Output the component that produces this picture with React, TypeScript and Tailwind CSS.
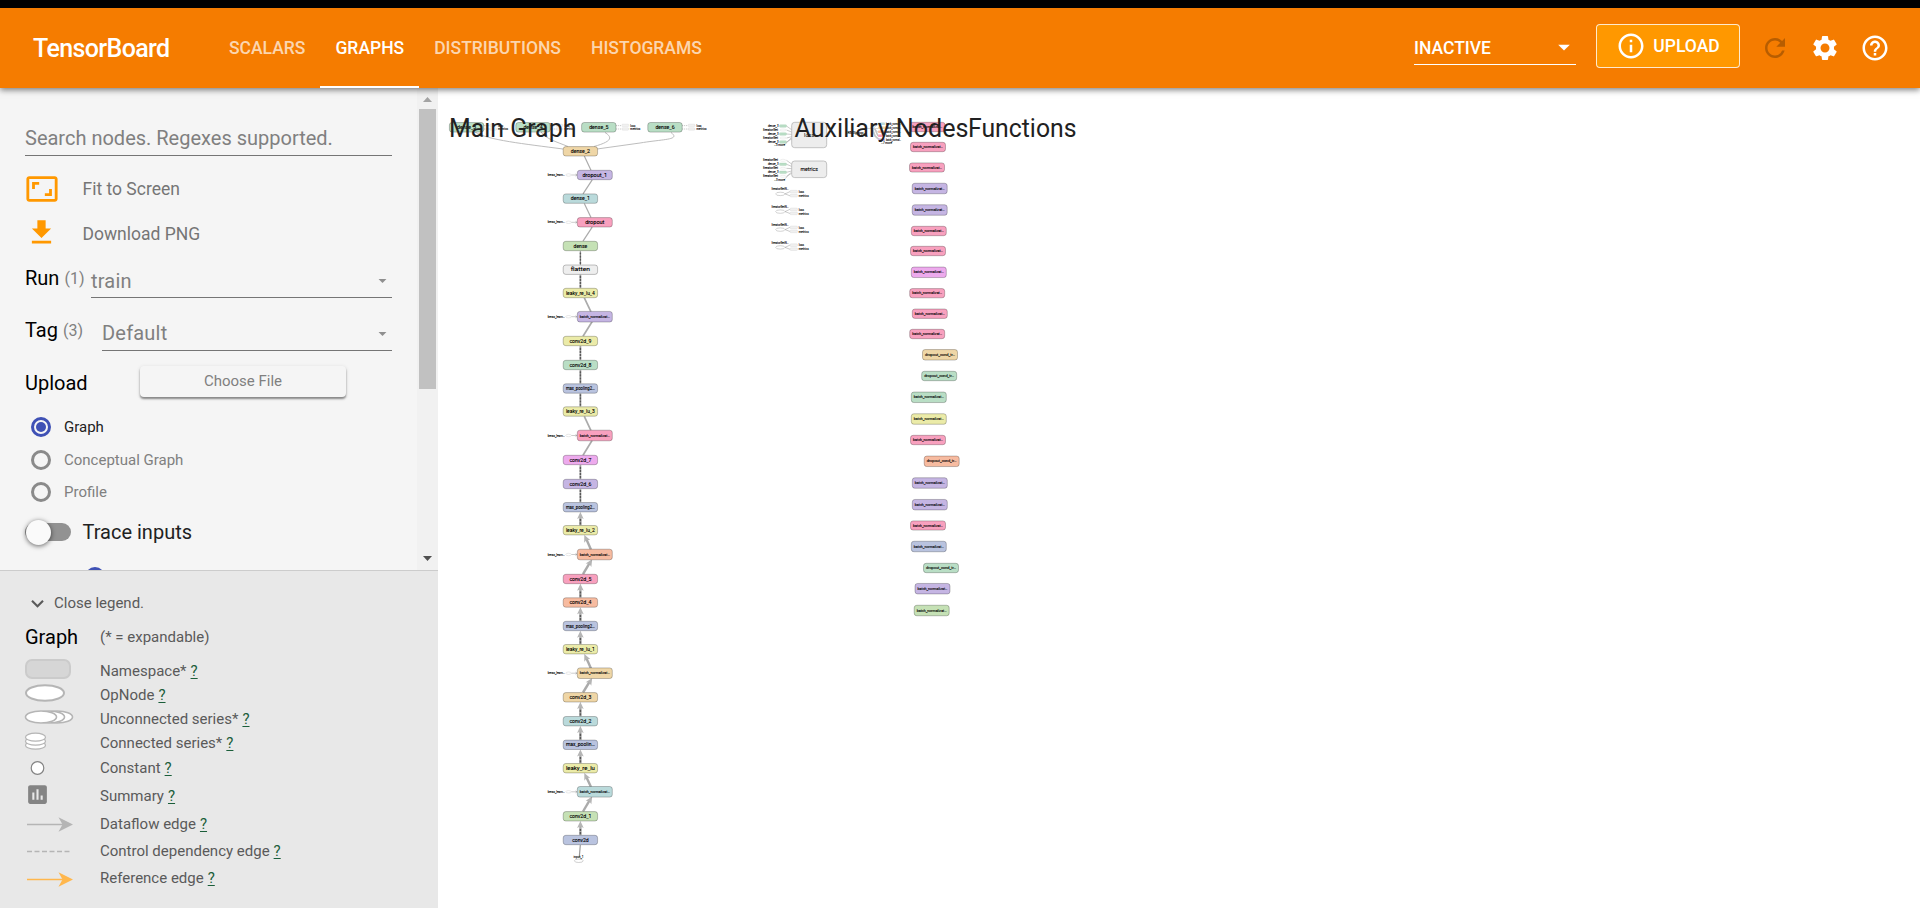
import React, { useState } from 'react';
import {
  MdArrowDropDown,
  MdAspectRatio,
  MdAssessment,
  MdFileDownload,
  MdHelpOutline,
  MdInfoOutline,
  MdKeyboardArrowDown,
  MdRefresh,
  MdSettings,
} from 'react-icons/md';

const TABS = ['SCALARS', 'GRAPHS', 'DISTRIBUTIONS', 'HISTOGRAMS'];
const COLOR_MODES = ['Graph', 'Conceptual Graph', 'Profile'];

const C = {
  blue: '#b9c3df',
  green: '#c5e1b5',
  mint: '#b9dec5',
  orange: '#f7bba0',
  pink: '#f8a0be',
  magenta: '#edaaed',
  purple: '#c5b5e3',
  tan: '#efd6a6',
  teal: '#badadb',
  yellow: '#ebeba8',
  grey: '#eeeeee',
};

interface GraphNode {
  label: string;
  y: number;
  fill: string;
  // side nodes sit right of the trunk and have a constant input
  side?: boolean;
}

// top (outputs) to bottom (input)
const TRUNK: GraphNode[] = [
  { label: 'dense_2', y: 151.3, fill: C.tan },
  { label: 'dropout_1', y: 175, fill: C.purple, side: true },
  { label: 'dense_1', y: 198.6, fill: C.teal },
  { label: 'dropout', y: 222.3, fill: C.pink, side: true },
  { label: 'dense', y: 246, fill: C.green },
  { label: 'flatten', y: 269.7, fill: C.grey },
  { label: 'leaky_re_lu_4', y: 293, fill: C.yellow },
  { label: 'batch_normalizat…', y: 316.7, fill: C.purple, side: true },
  { label: 'conv2d_9', y: 341, fill: C.yellow },
  { label: 'conv2d_8', y: 365, fill: C.mint },
  { label: 'max_pooling2…', y: 388.5, fill: C.blue },
  { label: 'leaky_re_lu_3', y: 411.5, fill: C.yellow },
  { label: 'batch_normalizat…', y: 435.5, fill: C.pink, side: true },
  { label: 'conv2d_7', y: 460, fill: C.magenta },
  { label: 'conv2d_6', y: 484, fill: C.purple },
  { label: 'max_pooling2…', y: 507.2, fill: C.blue },
  { label: 'leaky_re_lu_2', y: 530.2, fill: C.yellow },
  { label: 'batch_normalizat…', y: 554.5, fill: C.orange, side: true },
  { label: 'conv2d_5', y: 579, fill: C.pink },
  { label: 'conv2d_4', y: 602.5, fill: C.orange },
  { label: 'max_pooling2…', y: 626, fill: C.blue },
  { label: 'leaky_re_lu_1', y: 649.2, fill: C.yellow },
  { label: 'batch_normalizat…', y: 673.2, fill: C.tan, side: true },
  { label: 'conv2d_3', y: 697.3, fill: C.tan },
  { label: 'conv2d_2', y: 721.2, fill: C.teal },
  { label: 'max_poolin…', y: 744.8, fill: C.blue },
  { label: 'leaky_re_lu', y: 768.2, fill: C.yellow },
  { label: 'batch_normalizat…', y: 791.8, fill: C.teal, side: true },
  { label: 'conv2d_1', y: 816.3, fill: C.green },
  { label: 'conv2d', y: 840, fill: C.blue },
];

const FUNCTIONS: [number, number, string, number][] = [
  [927.5, 127, C.pink, 9.4],
  [928, 147, C.pink, 9.4],
  [927, 167.5, C.pink, 9.2],
  [929.7, 188.5, C.purple, 10.5],
  [929.7, 210, C.purple, 10.5],
  [928.8, 231, C.pink, 9.4],
  [928, 251, C.pink, 9.4],
  [928.8, 272.3, C.magenta, 10.5],
  [927.2, 293.2, C.pink, 9.2],
  [929.8, 313.7, C.pink, 9.4],
  [927.2, 334, C.pink, 9.4],
  [940, 354.8, C.tan, 10.5],
  [939.2, 376, C.mint, 9.4],
  [928.8, 397.3, C.mint, 10.5],
  [928.8, 419, C.yellow, 10.5],
  [928, 440, C.pink, 9.4],
  [941.7, 461.3, C.orange, 10.5],
  [929.8, 483, C.purple, 10.5],
  [929.8, 504.7, C.purple, 10.5],
  [928, 525.5, C.pink, 9.2],
  [928.8, 546.5, C.blue, 10.5],
  [941, 568, C.mint, 9.4],
  [932.5, 588.7, C.purple, 10.5],
  [931.7, 610.5, C.green, 10.5],
];

interface TinyTextProps {
  x: number;
  y: number;
  w: number;
  size?: number;
  children: string;
}

const TinyText: React.FC<TinyTextProps> = ({ x, y, w, size = 3, children }) => (
  <text
    x={x}
    y={y}
    fontSize={size}
    textLength={w}
    lengthAdjust="spacingAndGlyphs"
    fill="#000"
    stroke="#000"
    strokeWidth={0.1}
  >
    {children}
  </text>
);

interface BoxProps {
  x: number;
  y: number;
  fill: string;
  label: string;
  w?: number;
  h?: number;
}

const NodeBox: React.FC<BoxProps> = ({ x, y, fill, label, w = 34.4, h = 9.6 }) => {
  const long = label.length > 14;
  const textWidth = long ? 30 : Math.min(29, label.length * 2.75);
  return (
    <g>
      <rect x={x - w / 2} y={y - h / 2} width={w} height={h} rx={2.6} fill={fill} stroke="#000" strokeOpacity={0.3} strokeWidth={0.8} />
      <TinyText x={x - textWidth / 2} y={y + (long ? 1 : 1.6)} w={textWidth} size={long ? 3.2 : 4.8}>
        {label}
      </TinyText>
    </g>
  );
};

const nodeX = (n: GraphNode) => (n.side ? 594.8 : 580.4);

const TrunkEdge: React.FC<{ from: GraphNode; to: GraphNode; index: number }> = ({ from, to, index }) => {
  const vertical = !from.side && !to.side;
  // edge anchors lean towards the neighbouring column
  const x1 = from.side ? 591 : to.side ? 583 : 580.4;
  const x2 = to.side ? 592.2 : from.side ? 584.3 : 580.4;
  const y1 = from.y - 4.8;
  const y2 = to.y + 4.8;
  const arrow = index >= 15;
  const width = index < 5 ? 1.2 : index < 15 ? 1.7 : 2.4;
  const angle = (Math.atan2(y2 - y1, x2 - x1) * 180) / Math.PI;
  return (
    <g>
      <line x1={x1} y1={y1} x2={arrow ? x2 - (x2 - x1) * 0.3 : x2} y2={arrow ? y2 + 4 : y2} stroke="#ababab" strokeWidth={width} />
      {arrow && <path d="M0 0L-7 3.3L-5.4 0L-7 -3.3Z" fill="#b5b5b5" transform={`translate(${x2} ${y2}) rotate(${angle})`} />}
      {vertical && <line x1={x1} y1={y1 - 1} x2={x2} y2={arrow ? y2 + 7 : y2 + 1} stroke="#333" strokeOpacity={0.7} strokeWidth={1.5} strokeDasharray="2.2 0.9" />}
    </g>
  );
};

const OutputHead: React.FC<{ x: number; label: string }> = ({ x, label }) => (
  <g>
    <path d={`M${x + 17} 125.6h6M${x + 17} 129h6`} stroke="#999" strokeWidth={0.5} strokeDasharray="1.2 0.8" />
    <rect x={x + 23} y={124.2} width={7} height={2.4} rx={1} fill="#f1f1f1" stroke="#ccc" strokeWidth={0.3} />
    <rect x={x + 23} y={127.8} width={7} height={2.4} rx={1} fill="#f1f1f1" stroke="#ccc" strokeWidth={0.3} />
    <TinyText x={x + 31.5} y={126.5} w={5}>loss</TinyText>
    <TinyText x={x + 31.5} y={130} w={10}>metrics</TinyText>
    <NodeBox x={x} y={127.3} fill={C.mint} label={label} />
  </g>
);

const AuxInputs: React.FC<{ y: number; boxes: number[] }> = ({ y, boxes }) => (
  <g>
    {[0, 1, 2, 3, 4].map((i) => {
      const rowY = y + i * 4;
      const box = boxes.includes(i);
      return (
        <g key={i}>
          <path d={`M786.5 ${rowY}L792 ${y + 4 + i * 2.2}`} stroke="#999" strokeWidth={0.5} />
          <TinyText x={box ? 768 : 763} y={rowY + 1} w={box ? 10.5 : 15}>
            {box ? 'dense_3' : 'IteratorGet'}
          </TinyText>
          {box ? (
            <rect x={779.5} y={rowY - 1.3} width={7} height={2.6} rx={0.8} fill="#b9dec5" stroke="#9ec4aa" strokeWidth={0.3} />
          ) : (
            <ellipse cx={783} cy={rowY} rx={3} ry={1} fill="#fff" stroke="#ccc" strokeWidth={0.3} />
          )}
        </g>
      );
    })}
    <path d={`M785 ${y + 18.5}L791 ${y + 12}`} stroke="#999" strokeWidth={0.5} />
    <TinyText x={774} y={y + 20.2} w={11}>…3 more</TinyText>
  </g>
);

const GraphCanvas = () => (
  <svg width={1482} height={820} viewBox="438 88 1482 820" className="block" fontFamily="Roboto, 'Liberation Sans', sans-serif">
    {/* output heads feeding on dense_2 */}
    <g fill="none" stroke="#b5b5b5" strokeWidth={0.9}>
      <path d="M475 132C487 140 525 144 563 149" />
      <path d="M541 132C546 139 557 142 568 146.5" />
      <path d="M605 132.5C614 138 610 142 594 146.5" />
      <path d="M671 132.5C681 140 664 139 640 143L597 149" />
    </g>
    <OutputHead x={466.6} label="dense_3" />
    <OutputHead x={533} label="dense_4" />
    <OutputHead x={598.8} label="dense_5" />
    <OutputHead x={665} label="dense_6" />

    {TRUNK.slice(1).map((n, i) => (
      <TrunkEdge key={n.y} from={n} to={TRUNK[i]} index={i} />
    ))}
    {TRUNK.map((n) => (
      <g key={n.y}>
        {n.side && (
          <>
            <TinyText x={547.8} y={n.y + 1} w={17}>keras_learn…</TinyText>
            <ellipse cx={568.6} cy={n.y} rx={2.8} ry={1.2} fill="#fff" stroke="#c4c4c4" strokeWidth={0.4} />
            <path d={`M571.5 ${n.y}h5.5M575.5 ${n.y - 1}l1.5 1l-1.5 1`} fill="none" stroke="#999" strokeWidth={0.5} />
          </>
        )}
        <NodeBox
          x={nodeX(n)}
          y={n.y}
          fill={n.fill}
          label={n.label}
          w={n.side ? 35 : 34.4}
          h={n.label.startsWith('batch') ? 10.6 : 9.4}
        />
      </g>
    ))}
    <line x1={579.3} y1={857} x2={580.3} y2={845} stroke="#999" strokeWidth={1.2} />
    <ellipse cx={578.8} cy={860.8} rx={4.4} ry={1.7} fill="#fff" stroke="#b0b0b0" strokeWidth={0.6} />
    <TinyText x={573.6} y={858} w={10} size={3.2}>input_1</TinyText>

    {/* auxiliary nodes */}
    <AuxInputs y={126} boxes={[0, 2, 4]} />
    <AuxInputs y={160.3} boxes={[1, 3]} />
    <rect x={791.7} y={122.3} width={35} height={25.4} rx={3} fill="#ededed" stroke="#b5b5b5" strokeWidth={0.8} />
    <text x={809.2} y={136.5} fontSize={5.6} textAnchor="middle">loss</text>
    <rect x={791.7} y={161} width={35} height={16.6} rx={3} fill="#ededed" stroke="#b5b5b5" strokeWidth={0.8} />
    <TinyText x={800.5} y={171.2} w={17.5} size={6}>metrics</TinyText>
    {[189.3, 207, 225, 242.8].map((y) => (
      <g key={y}>
        <TinyText x={771.5} y={y + 1} w={17}>IteratorGetN…</TinyText>
        <ellipse cx={780.3} cy={y + 4.6} rx={4.6} ry={1.7} fill="#fff" stroke="#b5b5b5" strokeWidth={0.6} />
        <path d={`M785 ${y + 4.6}l5 -2.3M785 ${y + 4.6}l5 1.9`} stroke="#999" strokeWidth={0.5} />
        <rect x={790} y={y + 1} width={7.5} height={2.7} rx={1} fill="#f0f0f0" stroke="#ccc" strokeWidth={0.3} />
        <rect x={790} y={y + 5} width={7.5} height={2.7} rx={1} fill="#f0f0f0" stroke="#ccc" strokeWidth={0.3} />
        <TinyText x={798.7} y={y + 3.6} w={5.3}>loss</TinyText>
        <TinyText x={798.7} y={y + 7.5} w={10}>metrics</TinyText>
      </g>
    ))}

    {/* optimizer fan-out */}
    <TinyText x={847.5} y={134} w={16} size={3.4}>RMSprop</TinyText>
    <g fill="none" stroke="#c4c4c4" strokeWidth={0.7}>
      <path d="M860 128.5L873 128.5L878 124M873 128.5L878 128.5M873 128.5L878 132M873 129C875 135 876 139 880 141" />
      <path d="M871 127L875 136L880 140M875 129L878 136" strokeWidth={1.6} />
    </g>
    {[C.teal, C.tan, C.orange, C.pink, C.purple].map((fill, i) => (
      <g key={fill}>
        <rect x={878} y={122.4 + i * 4} width={7} height={2.6} rx={0.8} fill={fill} />
        <TinyText x={886} y={124.8 + i * 4} w={15}>batch_normal…</TinyText>
      </g>
    ))}
    <TinyText x={881} y={144} w={11}>…7 more</TinyText>

    {FUNCTIONS.map(([x, y, fill, h]) => (
      <NodeBox key={y} x={x} y={y} fill={fill} h={h} w={35} label={x > 935 ? 'dropout_cond_tr…' : 'batch_normalizat…'} />
    ))}

    <g fontSize={25} fill="#212121">
      <text x={448.9} y={137} textLength={127.5} lengthAdjust="spacingAndGlyphs">Main Graph</text>
      <text x={794.5} y={137} textLength={174} lengthAdjust="spacingAndGlyphs">Auxiliary Nodes</text>
      <text x={968} y={137} textLength={108.5} lengthAdjust="spacingAndGlyphs">Functions</text>
    </g>
  </svg>
);

const Header = () => (
  <header className="relative z-10 h-20 shrink-0 bg-[#f57c00] flex items-center text-white shadow-[0_2px_6px_rgba(0,0,0,0.5)]">
    <div className="w-[214px] pl-[33px] pt-0.5 text-[25px] font-medium tracking-[-0.025em]">TensorBoard</div>
    <nav className="flex h-full">
      {TABS.map((tab) => (
        <button
          key={tab}
          className={`px-[15px] h-full text-[17.5px] font-medium border-b-2 pt-0.5 ${
            tab === 'GRAPHS' ? 'border-white' : 'border-transparent text-white/70'
          }`}
        >
          {tab}
        </button>
      ))}
    </nav>
    <div className="ml-auto flex items-center pr-[30px]">
      <div className="w-[162px] h-[34px] -mt-px border-b border-white flex items-center justify-between text-[17.5px] font-medium">
        <span className="pt-0.5">INACTIVE</span>
        <MdArrowDropDown size={28} className="-mr-0.5" />
      </div>
      <button className="ml-5 mb-1 w-36 h-11 rounded bg-[#ff9800] border border-white/80 flex items-center justify-center gap-[7px] text-[17.5px] font-medium">
        <MdInfoOutline size={30} />
        <span>UPLOAD</span>
      </button>
      <MdRefresh size={30} className="ml-5 text-black/25" />
      <MdSettings size={30} className="ml-5" />
      <MdHelpOutline size={30} className="ml-5" />
    </div>
  </header>
);

interface SelectRowProps {
  name: string;
  count: number;
  value: string;
  className: string;
  labelClass: string;
  fieldClass: string;
}

const SelectRow: React.FC<SelectRowProps> = ({ name, count, value, className, labelClass, fieldClass }) => (
  <div className={`flex h-9 ${className}`}>
    <div className={`flex-1 flex items-center gap-[5px] text-xl text-black ${labelClass}`}>
      {name}
      <span className="text-base text-[#808080] pt-0.5">({count})</span>
    </div>
    <div className={`border-b border-[#757575] flex items-center justify-between text-xl text-[#808080] tracking-[0.01em] ${fieldClass}`}>
      {value}
      <MdArrowDropDown size={19} className="text-[#8f8f8f]" />
    </div>
  </div>
);

const Controls = () => {
  const [mode, setMode] = useState('Graph');
  return (
    <div className="h-[482px] flex overflow-hidden">
      <div className="w-[417px] pl-[25px] pr-[25px] overflow-hidden">
        <div className="mt-8 h-9 border-b border-[#757575] flex items-center text-xl text-[#808080]">Search nodes. Regexes supported.</div>
        <div className="mt-2.5 h-[45px] flex items-center text-[17.5px] text-[#757575]">
          <div className="w-[57.5px]"><MdAspectRatio size={34} className="text-[#ff9800]" /></div>
          <span className="pt-0.5">Fit to Screen</span>
        </div>
        <div className="h-[45px] flex items-center text-[17.5px] text-[#757575]">
          <div className="w-[57.5px]"><MdFileDownload size={33} className="-mt-0.5 text-[#ff9800]" /></div>
          <span className="pt-0.5">Download PNG</span>
        </div>
        <SelectRow name="Run" count={1} value="train" className="mt-1.5" labelClass="pb-1" fieldClass="w-[301px] pt-0.5" />
        <SelectRow name="Tag" count={3} value="Default" className="mt-[17px]" labelClass="pb-1.5" fieldClass="w-[290px] pt-px" />
        <div className="mt-[15px] h-[31px] flex items-center">
          <span className="w-[115px] pt-[3px] text-xl text-black">Upload</span>
          <button className="w-[206px] h-[31px] rounded-[4px] text-[15px] text-[#808080] shadow-[0_2px_2px_rgba(0,0,0,0.4),0_1px_4px_rgba(0,0,0,0.12)]">
            Choose File
          </button>
        </div>
        <div className="mt-3.5 h-[97px] flex flex-col justify-between">
          {COLOR_MODES.map((m) => (
            <button key={m} onClick={() => setMode(m)} className="h-8 pl-1.5 flex items-center gap-[13px] text-[15px]">
              <span
                className={`w-5 h-5 rounded-full flex items-center justify-center border-[3px] ${
                  m === mode ? 'border-[#3f51b5]' : 'border-[#8a8a8a]'
                }`}
              >
                {m === mode && <span className="w-2.5 h-2.5 rounded-full bg-[#3f51b5]" />}
              </span>
              <span className={m === mode ? 'text-[#212121]' : 'text-[#808080] pt-px'}>{m}</span>
            </button>
          ))}
        </div>
        <div className="h-12 flex items-center">
          <span className="w-[46px] h-[18px] rounded-full bg-[#929292] flex items-center">
            <span className="ml-px w-[25px] h-[25px] rounded-full bg-[#fafafa] shadow-[0_1px_5px_rgba(0,0,0,0.6)]" />
          </span>
          <span className="ml-[11.5px] text-xl text-[#212121]">Trace inputs</span>
        </div>
        <div className="mt-[11px] ml-[60px] w-5 h-5 rounded-full bg-[#3f51b5]" />
      </div>
      {/* Scrollbar */}
      <div className="w-[21px] px-0.5 bg-[#f1f1f1] flex flex-col items-center">
        <svg width={17} height={21} className="shrink-0"><path d="M4 14h9l-4.5-5z" fill="#a3a3a3" /></svg>
        <div className="w-[17px] h-[280px] bg-[#c1c1c1]" />
        <svg width={17} height={24} className="mt-auto"><path d="M4 10h9l-4.5 5z" fill="#505050" /></svg>
      </div>
    </div>
  );
};

interface LegendItem {
  name: string;
  height: string;
  icon: React.ReactNode;
}

const LEGEND: LegendItem[] = [
  {
    name: 'Namespace*',
    height: 'h-6',
    icon: <rect x={1} y={0} width={44} height={18} rx={6} fill="#d6d6d6" stroke="#cbcbcb" strokeWidth={2} />,
  },
  {
    name: 'OpNode',
    height: 'h-6',
    icon: <ellipse cx={20} cy={9} rx={19} ry={7.8} fill="#fff" stroke="#b5b5b5" strokeWidth={2} />,
  },
  {
    name: 'Unconnected series*',
    height: 'h-6',
    icon: (
      <g fill="#fff" stroke="#b5b5b5" strokeWidth={1.6}>
        <ellipse cx={32} cy={9} rx={15.5} ry={6} />
        <ellipse cx={24} cy={9} rx={15.5} ry={6} />
        <ellipse cx={16} cy={9} rx={15.5} ry={6} />
      </g>
    ),
  },
  {
    name: 'Connected series*',
    height: 'h-6',
    icon: (
      <g fill="#fff" stroke="#b5b5b5" strokeWidth={1.2}>
        <ellipse cx={10.5} cy={13.2} rx={10} ry={4} />
        <ellipse cx={10.5} cy={9.2} rx={10} ry={4} />
        <ellipse cx={10.5} cy={5.2} rx={10} ry={4} />
      </g>
    ),
  },
  {
    name: 'Constant',
    height: 'h-[26px]',
    icon: <circle cx={12.5} cy={11} r={6.3} fill="#fff" stroke="#848484" strokeWidth={1.2} />,
  },
  {
    name: 'Summary',
    height: 'h-[30px]',
    icon: <MdAssessment x={0} y={-3} size={25} color="#848484" />,
  },
  {
    name: 'Dataflow edge',
    height: 'h-[26px]',
    icon: (
      <g fill="#b5b5b5">
        <path d="M2 11.5h36" stroke="#b5b5b5" strokeWidth={1.5} />
        <path d="M48 11.5L33.5 18.8L37.5 11.5L33.5 4.2Z" />
      </g>
    ),
  },
  {
    name: 'Control dependency edge',
    height: 'h-[28px]',
    icon: <path d="M2 11.5h45" stroke="#b5b5b5" strokeWidth={1.5} strokeDasharray="5 2.5" />,
  },
  {
    name: 'Reference edge',
    height: 'h-[27px]',
    icon: (
      <g fill="#ffb74d">
        <path d="M2 11.5h36" stroke="#ffb74d" strokeWidth={1.5} />
        <path d="M48 11.5L33.5 18.8L37.5 11.5L33.5 4.2Z" />
      </g>
    ),
  },
];

const Legend = () => (
  <div className="flex-1 border-t border-[#cccccc] bg-[#e8e8e8] pl-[25px] pt-[17px] text-[15px] text-[#5a5a5a]">
    <div className="h-[30px] flex items-center">
      <MdKeyboardArrowDown size={25} className="mr-1" />
      Close legend.
    </div>
    <div className="h-[41px] pb-[3px] flex items-center">
      <span className="w-[75px] text-xl text-black">Graph</span>
      (* = expandable)
    </div>
    {LEGEND.map((item) => (
      <div key={item.name} className={`flex items-center ${item.height}`}>
        <svg width={50} height={22} className="mr-[25px] overflow-visible">{item.icon}</svg>
        {item.name}
        <a className="ml-1 underline text-[#1b5e3a] underline-offset-2">?</a>
      </div>
    ))}
  </div>
);

export default function App() {
  return (
    <div className="w-full h-[908px] flex flex-col bg-white overflow-hidden font-['Roboto','Liberation_Sans',sans-serif]">
      <div className="h-2 bg-black shrink-0" />
      <Header />
      <main className="flex h-[820px]">
        <aside className="w-[438px] shrink-0 flex flex-col bg-[#f5f5f5]">
          <Controls />
          <Legend />
        </aside>
        <GraphCanvas />
      </main>
    </div>
  );
}
